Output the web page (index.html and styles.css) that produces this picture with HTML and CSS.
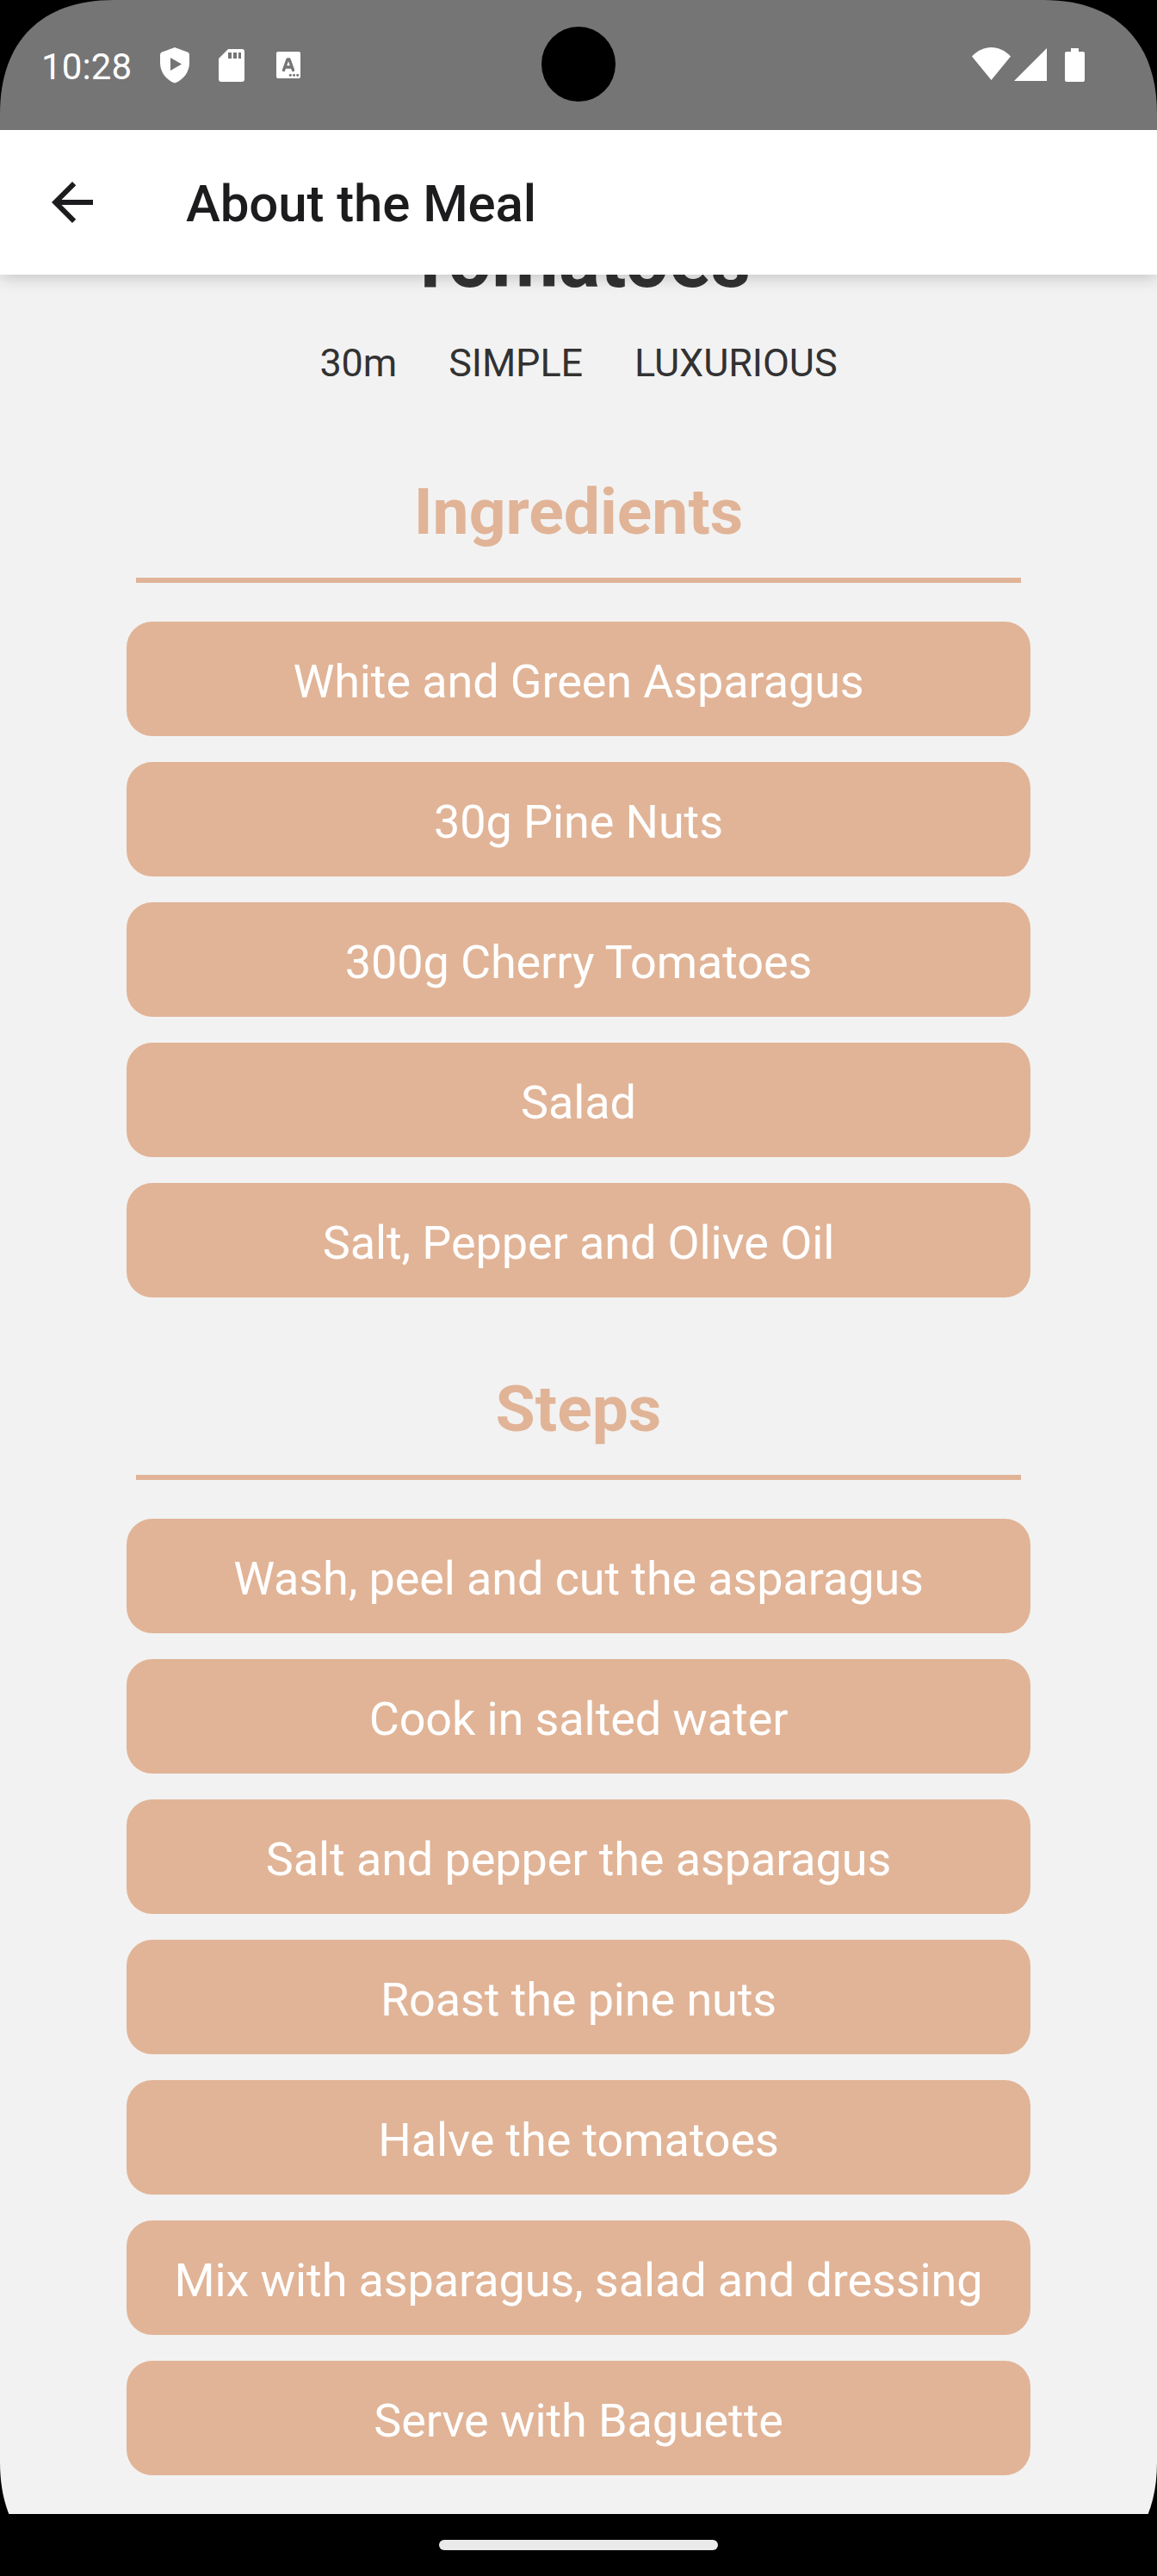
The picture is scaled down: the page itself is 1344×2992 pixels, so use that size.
FILE: index.html
```html
<!DOCTYPE html>
<html lang="en">
<head>
<meta charset="utf-8">
<title>About the Meal</title>
<link rel="stylesheet" href="styles.css">
</head>
<body>
<div class="screen">
  <div class="status-bar">
    <div class="status-left">
      <span class="clock">10:28</span>
      <svg class="shield" width="34" height="42" viewBox="0 0 34 42"><path fill="#fff" fill-rule="evenodd" d="M17 0Q19 .8 32 5.500Q34 6.500 34 8.500V18C34 28.500 27 38 17 41.500C7 38 0 28.500 0 18V8.500Q0 6.500 2 5.500Q15 .8 17 0ZM12 12V27L25 19.500Z"/></svg>
      <svg class="card" width="30" height="38" viewBox="0 0 30 38"><path fill="#fff" fill-rule="evenodd" d="M11 0H27Q30 0 30 3V35Q30 38 27 38H3Q0 38 0 35V11ZM11 4V11H15V4ZM17 4V11H21V4ZM23 4V11H26V4Z"/></svg>
      <svg class="keyboard" width="28" height="31" viewBox="0 0 28 31"><rect width="28" height="31" rx="2" fill="#fff"/><path d="M8.500 21.500L13 9H15L19.500 21.500M10 18H18" fill="none" stroke="#757575" stroke-width="3.400" stroke-linejoin="round" stroke-linecap="round"/><g fill="#757575"><circle cx="16.300" cy="27.300" r="1.500"/><circle cx="20.500" cy="27.300" r="1.500"/><circle cx="24.700" cy="27.300" r="1.500"/></g></svg>
    </div>
    <div class="status-right">
      <svg class="wifi" width="45" height="38" viewBox="0 0 45 38"><path fill="#fff" d="M0 10.500C13-3.500 32-3.500 45 10.500L22.500 38Z"/></svg>
      <svg class="signal" width="38" height="38" viewBox="0 0 38 38"><path fill="#fff" d="M38 0V38H0Z"/></svg>
      <svg class="battery" width="23" height="39" viewBox="0 0 23 39"><path fill="#fff" d="M7 0H16V4H21Q23 4 23 6V37Q23 39 21 39H2Q0 39 0 37V6Q0 4 2 4H7Z"/></svg>
    </div>
    <div class="camera"></div>
  </div>
  <header class="app-bar">
    <svg class="back" width="48" height="48" viewBox="0 0 16 16"><path fill="#1c1c1e" d="M16 7H3.830l5.590-5.590L8 0 0 8l8 8 1.410-1.410L3.830 9H16z"/></svg>
    <h1 class="app-title">About the Meal</h1>
  </header>
  <main class="content">
    <h2 class="meal-name">Tomatoes</h2>
    <div class="meta"><span>30m</span><span>SIMPLE</span><span>LUXURIOUS</span></div>
    <section class="section">
      <h3 class="section-title">Ingredients</h3>
      <ul class="list">
        <li class="item">White and Green Asparagus</li>
        <li class="item">30g Pine Nuts</li>
        <li class="item">300g Cherry Tomatoes</li>
        <li class="item">Salad</li>
        <li class="item">Salt, Pepper and Olive Oil</li>
      </ul>
    </section>
    <section class="section">
      <h3 class="section-title">Steps</h3>
      <ul class="list">
        <li class="item">Wash, peel and cut the asparagus</li>
        <li class="item">Cook in salted water</li>
        <li class="item">Salt and pepper the asparagus</li>
        <li class="item">Roast the pine nuts</li>
        <li class="item">Halve the tomatoes</li>
        <li class="item">Mix with asparagus, salad and dressing</li>
        <li class="item">Serve with Baguette</li>
      </ul>
    </section>
  </main>
  <div class="nav-bar"><div class="nav-handle"></div></div>
</div>
</body>
</html>
```
FILE: styles.css
```css
* { box-sizing: border-box; }

body {
  margin: 0;
  background: #000;
  font-family: Roboto, sans-serif;
}

.screen {
  display: flex;
  flex-direction: column;
  width: 1344px;
  height: 2992px;
  overflow: hidden;
  background: #000;
  clip-path: path("M0 132C0 48 48 0 132 0H1212C1296 0 1344 48 1344 132V2860C1344 2944 1296 2992 1212 2992H132C48 2992 0 2944 0 2860Z");
}

.status-bar {
  position: relative;
  display: flex;
  justify-content: space-between;
  flex: none;
  height: 151px;
  padding: 0 84px 0 48px;
  background: #757575;
}

.status-left,
.status-right {
  display: flex;
  align-items: flex-start;
}

.clock {
  margin-top: 53px;
  width: 138px;
  font-size: 42px;
  line-height: 49px;
  letter-spacing: 0.1px;
  color: #fff;
}

.shield { margin-top: 55px; }
.card { margin: 57px 0 0 34px; }
.keyboard { margin: 60px 0 0 37px; }
.wifi { margin-top: 55px; }
.signal { margin: 56px 0 0 4px; }
.battery { margin: 56px 0 0 21px; }

.camera {
  position: absolute;
  left: 629px;
  top: 31px;
  width: 86px;
  height: 87px;
  border-radius: 50%;
  background: #000;
}

.app-bar {
  position: relative;
  z-index: 1;
  display: flex;
  align-items: center;
  flex: none;
  height: 168px;
  padding-left: 60px;
  background: #fff;
  box-shadow: 0 3px 18px rgba(0, 0, 0, 0.2);
  clip-path: inset(0 0 -30px 0);
}

.app-title {
  margin: 4px 0 0 108px;
  font-size: 60px;
  font-weight: 500;
  line-height: 70px;
  letter-spacing: -0.1px;
  color: #1c1c1e;
}

.content {
  flex: none;
  height: 2601px;
  overflow: hidden;
  background: #f2f2f2;
  color: #323232;
}

.meal-name {
  margin: -69px 0 0;
  font-size: 90px;
  font-weight: 700;
  line-height: 106px;
  text-align: center;
}

.meta {
  display: flex;
  justify-content: center;
  gap: 60px;
  margin-top: 39px;
  font-size: 45px;
  line-height: 53px;
  letter-spacing: -0.1px;
}

.section { width: 1050px; margin: 102px auto 0; }
.section + .section { margin-top: 85px; }

.section-title {
  width: 1028px;
  height: 127px;
  margin: 0 auto;
  border-bottom: 6px solid #e1b497;
  font-size: 75px;
  font-weight: 700;
  line-height: 88px;
  text-align: center;
  color: #e1b497;
}

.list {
  display: flex;
  flex-direction: column;
  gap: 30px;
  margin: 45px 0 0;
  padding: 0;
  list-style: none;
}

.item {
  height: 133px;
  padding-top: 38px;
  border-radius: 30px;
  background: #e1b497;
  font-size: 54px;
  line-height: 63px;
  letter-spacing: -0.11px;
  text-align: center;
  color: #fff;
}

.nav-bar {
  flex: none;
  display: flex;
  justify-content: center;
  height: 72px;
  padding-top: 30px;
  background: #000;
}

.nav-handle {
  width: 324px;
  height: 12px;
  border-radius: 6px;
  background: #eaeaea;
}
```
